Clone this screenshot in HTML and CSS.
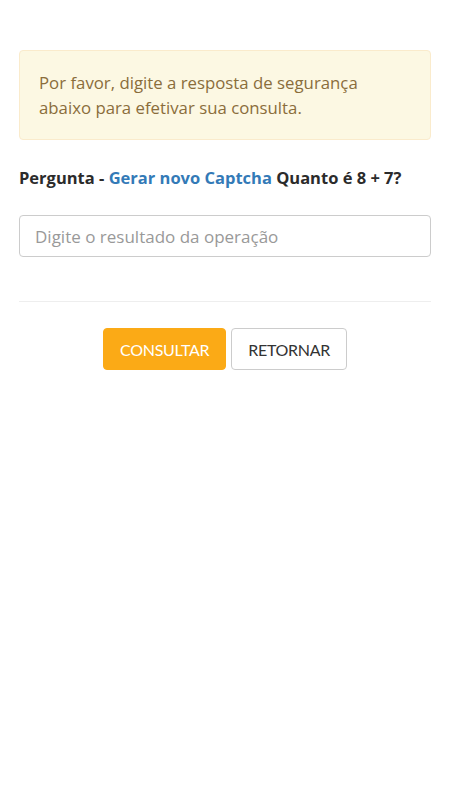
FILE: index.html
```html
<!DOCTYPE html>
<html lang="pt-BR">
<head>
<meta charset="utf-8">
<title>Consulta</title>
<link rel="stylesheet" href="styles.css">
</head>
<body>
<main class="page">
  <div class="alert">Por favor, digite a resposta de segurança abaixo para efetivar sua consulta.</div>
  <p class="question">Pergunta - <a class="link" href="#">Gerar novo Captcha</a> Quanto é 8 + 7?</p>
  <input class="field" type="text" placeholder="Digite o resultado da operação">
  <hr class="divider">
  <div class="actions">
    <button class="btn btn-primary" type="button">CONSULTAR</button>
    <button class="btn btn-default" type="button">RETORNAR</button>
  </div>
</main>
</body>
</html>
```

FILE: styles.css
```css
html, body {
  margin: 0;
  padding: 0;
  background: #fff;
}
body {
  font-family: "Open Sans", "DejaVu Sans", sans-serif;
  font-size: 17px;
  color: #333;
}
.page {
  padding: 50px 19px 0;
}
.alert {
  background: #fcf8e3;
  border: 1px solid #faebcc;
  border-radius: 4px;
  color: #8a6d3b;
  padding: 19px;
  line-height: 25px;
  font-size: 16.8px;
}
.question {
  margin: 28px 0 0;
  font-weight: bold;
  font-size: 16.5px;
  line-height: 20px;
  color: #2b2b2b;
}
.link {
  color: #337ab7;
  text-decoration: none;
}
.field {
  display: block;
  box-sizing: border-box;
  width: 100%;
  height: 42px;
  margin-top: 27px;
  padding: 0 15px;
  border: 1px solid #ccc;
  border-radius: 4px;
  font-family: inherit;
  font-size: 17px;
  color: #555;
}
.field::placeholder {
  color: #999;
}
.divider {
  margin: 44px 0 0;
  border: 0;
  border-top: 1px solid #eee;
}
.actions {
  display: flex;
  justify-content: center;
  gap: 5px;
  margin-top: 26px;
}
.btn {
  height: 42px;
  padding: 0 16px;
  border-radius: 4px;
  font-family: Lato, sans-serif;
  font-size: 16px;
  letter-spacing: -0.3px;
  cursor: pointer;
}
.btn-primary {
  background: #fbaa16;
  border: 1px solid #fbaa16;
  color: #fff;
}
.btn-default {
  background: #fff;
  border: 1px solid #ccc;
  color: #333;
}
```
